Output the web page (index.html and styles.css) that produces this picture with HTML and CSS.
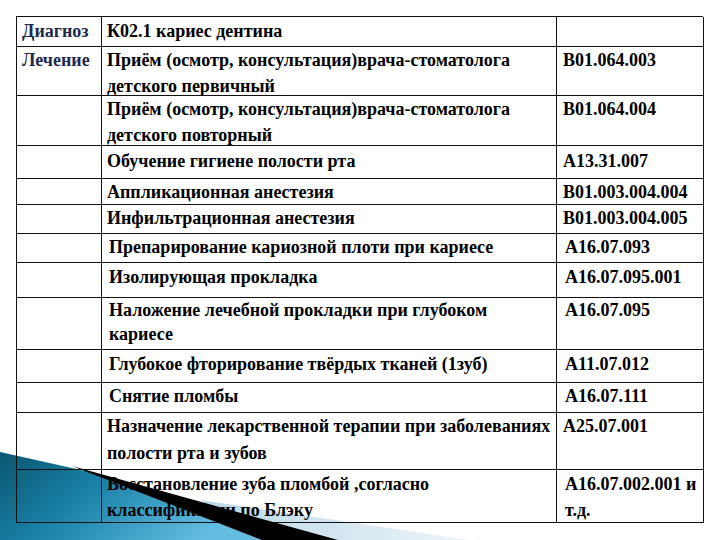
FILE: index.html
```html
<!DOCTYPE html>
<html lang="ru">
<head>
<meta charset="utf-8">
<title>Кариес дентина</title>
<link rel="stylesheet" href="styles.css">
</head>
<body>
<svg class="swoosh swoosh-back" viewBox="0 0 720 540" width="720" height="540" aria-hidden="true">
  <defs>
    <linearGradient id="teal" x1="0" y1="0" x2="1" y2="0.4">
      <stop offset="0" stop-color="#0a5670"/>
      <stop offset="0.45" stop-color="#1a82a8"/>
      <stop offset="1" stop-color="#62bde0"/>
    </linearGradient>
    <linearGradient id="pale" x1="0" y1="0" x2="1" y2="0">
      <stop offset="0" stop-color="#b9d8e8"/>
      <stop offset="1" stop-color="#eef5f9"/>
    </linearGradient>
  </defs>
  <polygon points="200,500 470,540 262,540" fill="url(#pale)"/>
  <polygon points="0,452 90,472 262,540 0,540" fill="url(#teal)"/>
</svg>

<div class="sheet">
  <div class="grid">
    <div class="cell c1 p1">Диагноз</div>
    <div class="cell c2 p1">К02.1 кариес дентина</div>
    <div class="cell c3 p1"></div>

    <div class="cell c1">Лечение</div>
    <div class="cell c2">Приём (осмотр, консультация)врача-стоматолога<br>детского первичный</div>
    <div class="cell c3">B01.064.003</div>

    <div class="cell c1"></div>
    <div class="cell c2">Приём (осмотр, консультация)врача-стоматолога<br>детского повторный</div>
    <div class="cell c3">B01.064.004</div>

    <div class="cell c1"></div>
    <div class="cell c2 p2">Обучение гигиене полости рта</div>
    <div class="cell c3 p2">A13.31.007</div>

    <div class="cell c1"></div>
    <div class="cell c2">Аппликационная анестезия</div>
    <div class="cell c3">B01.003.004.004</div>

    <div class="cell c1"></div>
    <div class="cell c2">Инфильтрационная анестезия</div>
    <div class="cell c3">B01.003.004.005</div>

    <div class="cell c1"></div>
    <div class="cell c2 ind">Препарирование кариозной плоти при кариесе</div>
    <div class="cell c3 ind">A16.07.093</div>

    <div class="cell c1"></div>
    <div class="cell c2 ind p1">Изолирующая прокладка</div>
    <div class="cell c3 ind p1">A16.07.095.001</div>

    <div class="cell c1"></div>
    <div class="cell c2 ind tight">Наложение лечебной прокладки при глубоком<br>кариесе</div>
    <div class="cell c3 ind tight">A16.07.095</div>

    <div class="cell c1"></div>
    <div class="cell c2 ind p1">Глубокое фторирование твёрдых тканей (1зуб)</div>
    <div class="cell c3 ind p1">A11.07.012</div>

    <div class="cell c1"></div>
    <div class="cell c2 ind">Снятие пломбы</div>
    <div class="cell c3 ind">A16.07.111</div>

    <div class="cell c1"></div>
    <div class="cell c2 loose">Назначение лекарственной терапии при заболеваниях<br>полости рта и зубов</div>
    <div class="cell c3">A25.07.001</div>

    <div class="cell c1"></div>
    <div class="cell c2 p1">Восстановление зуба пломбой ,согласно<br>классификации по Блэку</div>
    <div class="cell c3 ind p1">A16.07.002.001 и<br>т.д.</div>
  </div>
</div>

<svg class="swoosh swoosh-front" viewBox="0 0 720 540" width="720" height="540" aria-hidden="true">
  <polygon points="72,466 338,540 262,540" fill="#000"/>
</svg>
</body>
</html>
```

FILE: styles.css
```css
html {
  margin: 0;
  padding: 0;
  background: #ffffff;
}

body {
  margin: 0;
  width: 720px;
  height: 540px;
  position: relative;
  overflow: hidden;
  font-family: "Liberation Serif", "Times New Roman", serif;
  font-size: 18px;
  font-weight: 700;
  color: #000;
}

.swoosh {
  position: absolute;
  left: 0;
  top: 0;
  pointer-events: none;
}

.swoosh-back { z-index: 0; }
.swoosh-front { z-index: 2; }

.sheet {
  position: relative;
  z-index: 1;
  padding: 16px 0 0 16px;
}

.grid {
  display: grid;
  width: 687px;
  grid-template-columns: 85px 455px 147px;
  grid-template-rows: 30px 49px 50px 33px 26px 29px 29px 35px 52px 33px 30px 57px 53px;
  border-top: 1px solid #111;
  border-left: 1px solid #111;
  box-sizing: border-box;
}

.cell {
  line-height: 26px;
  border-right: 1px solid #111;
  border-bottom: 1px solid #111;
  padding: 0 0 0 5px;
  overflow: hidden;
  white-space: nowrap;
}

.c1 {
  color: #1b2a4e;
}

.c3 {
  padding-left: 6px;
}

.ind { padding-left: 7px; }
.c3.ind { padding-left: 8px; }
.p1 { padding-top: 1px; }
.p2 { padding-top: 2px; }
.tight { line-height: 24px; }
.loose { line-height: 27px; }
```
